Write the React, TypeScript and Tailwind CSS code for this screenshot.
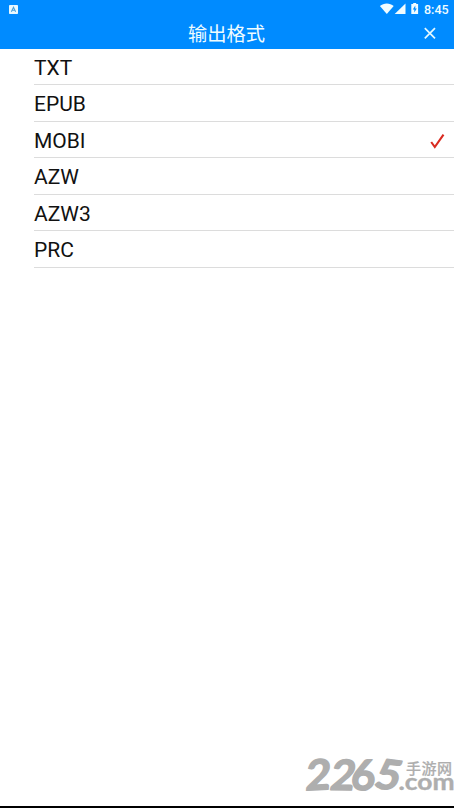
const formats = ['TXT', 'EPUB', 'MOBI', 'AZW', 'AZW3', 'PRC'];
const selected = 'MOBI';

function StatusBar() {
  return (
    <div className="flex h-[18px] items-center justify-between pl-[9px] pr-[5px]">
      <svg className="h-[9px] w-[9px]" viewBox="0 0 9 9">
        <rect width="9" height="9" rx="0.8" fill="#e8f8ff" />
        <path d="M2.4 6.8 4.5 2.3 6.6 6.8M3.3 5.3h2.4" fill="none" stroke="#4a9fd8" strokeWidth="1.1" />
      </svg>
      <div className="flex h-[18px] items-center">
        <svg className="h-[18px] w-[44px]" viewBox="0 0 44 18" fill="#f0fcff">
          <path d="M2.9 6C6.7 2.6 12.9 2.6 16.7 6L9.8 14Z" />
          <path d="M28.5 3.5V14H17.7Z" />
          <path fillRule="evenodd" d="M34.3 4.1h1.9v-1h3v1h1.9v9.8h-6.8zM38.3 5.5l-2.5 4h1.5v3l2.5-4.1h-1.5z" />
        </svg>
        <span className="ml-[3px] mt-[2px] w-[25px] whitespace-nowrap font-['Roboto',sans-serif] text-[12.5px] font-medium leading-[16px] text-[#effcff]">8:45</span>
      </div>
    </div>
  );
}

function Watermark() {
  return (
    <svg className="absolute left-[294px] top-[740px] h-[68px] w-[160px] overflow-visible" viewBox="294 740 160 68" fill="#aeaeae" stroke="#aeaeae" strokeLinejoin="round">
      <g fontFamily="'Lato', sans-serif" fontWeight="700" fontSize="42" strokeWidth="1.4">
        <text transform="translate(305 790.5) rotate(-3) skewX(-7) scale(1.03 1)">2</text>
        <text transform="translate(329 789.8) rotate(1) skewX(-8) scale(1 1)">2</text>
        <text transform="translate(350.5 790) skewX(-3) scale(1 1)">6</text>
        <text transform="translate(372.5 787.5) rotate(7) skewX(-9) scale(1.02 .98)">5</text>
      </g>
      <text x="406" y="773.6" fontFamily="'Noto Sans CJK SC', sans-serif" fontWeight="500" fontSize="15" strokeWidth="0.2" textLength="46">手游网</text>
      <text x="398.5" y="790.3" fontFamily="'Lato', sans-serif" fontWeight="700" fontSize="23" strokeWidth="0.4" textLength="56" lengthAdjust="spacingAndGlyphs">.com</text>
    </svg>
  );
}

export default function App() {
  return (
    <div className="relative flex h-[808px] w-[454px] flex-col overflow-hidden bg-white">
      <header className="h-[48.5px] shrink-0 bg-[#008bff]">
        <StatusBar />
        <div className="grid h-[30px] grid-cols-[1fr_auto_1fr] items-center pr-[18px]">
          <span />
          <h1 className="ml-[17px] font-['Noto_Sans_CJK_SC',sans-serif] text-[19.3px] leading-[30px] text-[#effcff]">输出格式</h1>
          <button aria-label="关闭" className="justify-self-end">
            <svg className="h-[12px] w-[12px]" viewBox="0 0 12 12" fill="none" stroke="#e4f8ff" strokeWidth="1.7">
              <path d="m.8 1.2 10.2 10.2M11 1.2.8 11.4" />
            </svg>
          </button>
        </div>
      </header>
      <ul className="flex-1 pl-[34px]">
        {formats.map((name) => (
          <li key={name} className="flex h-[36.5px] items-center justify-between border-b border-[#dcdcdc] pr-[9px]">
            <span className="mt-[3px] font-['Roboto',sans-serif] text-[21px] leading-[34px] text-[#111]">{name}</span>
            {name === selected && (
              <svg className="mt-[3px] h-[16px] w-[15px]" viewBox="0 0 15 16">
                <path d="M1.2 9 4.8 14 13.5 1.7" fill="none" stroke="#d92b20" strokeWidth="2.1" />
              </svg>
            )}
          </li>
        ))}
      </ul>
      <footer className="h-[2px] shrink-0 bg-black" />
      <Watermark />
    </div>
  );
}
